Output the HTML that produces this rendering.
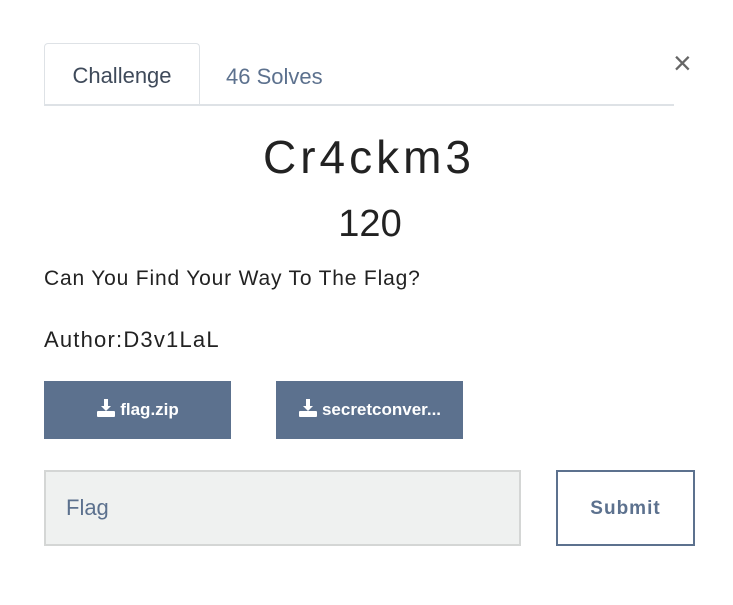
<!DOCTYPE html>
<html><head><style>
body{margin:0;background:#fff;width:733px;height:605px;position:relative;font-family:"Liberation Sans",sans-serif;color:#222;overflow:hidden}
.a{position:absolute}
.tab{left:44px;top:43px;height:61px;border:1px solid #dee2e6;border-bottom:none;border-radius:4px 4px 0 0;background:#fff;font-size:22px;color:#3f4a5a;text-align:center;line-height:64px;box-sizing:border-box;width:156px}
.line{left:44px;top:104px;width:630px;height:2px;background:#dee2e6}
.btn{top:381px;width:187px;height:58px;background:#5c718e;color:#fff;font-size:17px;font-weight:bold;line-height:58px;text-align:center}
</style></head><body>
<div class="a line"></div>
<div class="a tab">Challenge</div>
<div class="a" style="left:226px;top:64px;font-size:22px;color:#5c718e">46 Solves</div>
<div class="a" style="left:673px;top:47px;font-size:32px;color:#666;line-height:32px">×</div>
<div class="a" style="left:0;width:738px;top:130px;text-align:center;font-size:46px;font-weight:300;letter-spacing:4px;color:#222">Cr4ckm3</div>
<div class="a" style="left:0;width:740px;top:203px;text-align:center;font-size:38px;color:#222">120</div>
<div class="a" style="left:44px;top:267px;font-size:21px;letter-spacing:0.82px">Can You Find Your Way To The Flag?</div>
<div class="a" style="left:44px;top:327px;font-size:22px;letter-spacing:1.2px">Author:D3v1LaL</div>
<div class="a btn" style="left:44px"><svg width="20" height="20" viewBox="0 0 20 20" style="vertical-align:-3px;margin-right:4px"><path d="M8 1h4v7h3l-5 5-5-5h3z" fill="#fff"/><rect x="1" y="13" width="18" height="6" rx="1" fill="#fff"/></svg>flag.zip</div>
<div class="a btn" style="left:276px"><svg width="20" height="20" viewBox="0 0 20 20" style="vertical-align:-3px;margin-right:4px"><path d="M8 1h4v7h3l-5 5-5-5h3z" fill="#fff"/><rect x="1" y="13" width="18" height="6" rx="1" fill="#fff"/></svg>secretconver...</div>
<div class="a" style="left:44px;top:470px;width:477px;height:76px;box-sizing:border-box;background:#eff1f0;border:2px solid #d4d6d5;font-size:22px;color:#5c718e;line-height:72px;padding-left:20px">Flag</div>
<div class="a" style="left:556px;top:470px;width:139px;height:76px;box-sizing:border-box;border:2px solid #5c718e;font-size:19px;font-weight:bold;color:#5c718e;text-align:center;line-height:74px;letter-spacing:1px">Submit</div>
</body></html>
